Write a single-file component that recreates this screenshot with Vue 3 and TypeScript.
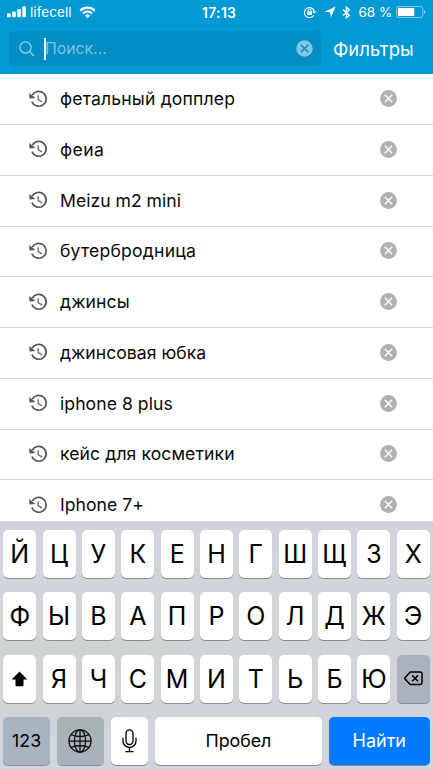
<script setup lang="ts">
interface HistoryItem {
  text: string
  spacing: number
}

const history: HistoryItem[] = [
  { text: 'фетальный допплер', spacing: 0.15 },
  { text: 'феиа', spacing: 0.4 },
  { text: 'Meizu m2 mini', spacing: 0 },
  { text: 'бутербродница', spacing: 0.2 },
  { text: 'джинсы', spacing: 0.1 },
  { text: 'джинсовая юбка', spacing: 0.02 },
  { text: 'iphone 8 plus', spacing: 0.05 },
  { text: 'кейс для косметики', spacing: 0.09 },
  { text: 'Iphone 7+', spacing: 0.04 },
]

const topRow: string[] = [...'ЙЦУКЕНГШЩЗХ']
const middleRow: string[] = [...'ФЫВАПРОЛДЖЭ']
const lowerRow: string[] = [...'ЯЧСМИТЬБЮ']
</script>

<template>
  <div class="screen">
    <header class="header">
      <div class="status">
        <div class="status-left">
          <svg class="signal" width="20" height="12" viewBox="0 0 20 12" fill="#fff">
            <rect x="0" y="7.3" width="3.7" height="4" rx="0.9" />
            <rect x="5.1" y="5.4" width="3.7" height="5.9" rx="0.9" />
            <rect x="10.2" y="3" width="3.7" height="8.3" rx="0.9" />
            <rect x="15.3" y="0.3" width="3.7" height="11" rx="0.9" />
          </svg>
          <span class="carrier">lifecell</span>
          <svg class="wifi" width="17" height="13" viewBox="0 0 17 13">
            <path d="M1.2 4.6A10.6 10.6 0 0 1 15.8 4.6" fill="none" stroke="#fff" stroke-width="2.2" />
            <path d="M3.9 7.4A6.7 6.7 0 0 1 13.1 7.4" fill="none" stroke="#fff" stroke-width="2.1" />
            <path d="M5.9 9.5A3.9 3.9 0 0 1 11.1 9.5L8.5 12.2Z" fill="#fff" />
          </svg>
        </div>
        <span class="clock">17:13</span>
        <div class="status-right">
          <svg class="lock" width="14" height="12" viewBox="0 0 14 12">
            <path d="M10.7 9.2A5 5 0 1 1 11.2 5" fill="none" stroke="#fff" stroke-width="1.1" />
            <path d="M9.2 5.3H13.3L11.3 7.7Z" fill="#fff" />
            <rect x="4.1" y="5.3" width="4.8" height="3.6" rx="0.4" fill="#fff" />
            <path d="M5 5.6V4.5a1.5 1.5 0 0 1 3 0V5.6" fill="none" stroke="#fff" stroke-width="1" />
          </svg>
          <svg class="arrow" width="12" height="12" viewBox="0 0 12 12">
            <path d="M11.6 0.6L6.9 11.6L6.1 6.3L0.5 5.7Z" fill="#fff" />
          </svg>
          <svg class="bluetooth" width="9" height="13" viewBox="0 0 9 13">
            <path d="M1 3.6L7.4 9.2L4.4 11.8V1.2L7.4 3.8L1 9.4" fill="none" stroke="#fff" stroke-width="1.3" />
          </svg>
          <span class="percent">68 %</span>
          <svg class="battery" width="30" height="12" viewBox="0 0 30 12">
            <rect x="0.6" y="0.6" width="26.2" height="10.8" rx="2.2" fill="none" stroke="#8fd0ed" stroke-width="1" />
            <rect x="2" y="2" width="16.3" height="8" rx="0.8" fill="#fff" />
            <path d="M28 4V8Q29.4 7.3 29.4 6T28 4Z" fill="#8fd0ed" />
          </svg>
        </div>
      </div>
      <div class="search-line">
        <div class="search">
          <svg class="magnifier" width="16" height="16" viewBox="0 0 16 16" fill="none" stroke="#a0d3eb" stroke-width="1.2">
            <circle cx="6.5" cy="6.5" r="5.6" />
            <path d="M10.6 10.6L15 15" />
          </svg>
          <i class="caret"></i>
          <span class="placeholder">Поиск...</span>
          <svg class="clear" width="17" height="17" viewBox="0 0 17 17">
            <circle cx="8.5" cy="8.5" r="8.2" fill="#84c6e3" />
            <path d="M4.8 4.8L12.2 12.2M12.2 4.8L4.8 12.2" stroke="#008dc3" stroke-width="1.4" />
          </svg>
        </div>
        <span class="filters">Фильтры</span>
      </div>
    </header>

    <ul class="history">
      <li v-for="item in history" :key="item.text" class="row">
        <svg class="clock-icon" width="19" height="18" viewBox="0 0 19 18">
          <path d="M3.3 5.2A7.4 7.4 0 1 1 2.9 11.6" fill="none" stroke="#555" stroke-width="1.7" />
          <path d="M0.4 3.4L0.8 8.2L5.9 7.8Z" fill="#555" stroke="#555" stroke-width="0.5" />
          <path d="M9.2 5.2V9.6L12.8 11.9" fill="none" stroke="#666" stroke-width="1.3" />
        </svg>
        <span class="query" :style="{ letterSpacing: item.spacing + 'px' }">{{ item.text }}</span>
        <svg class="remove" width="17" height="17" viewBox="0 0 17 17">
          <circle cx="8.5" cy="8.5" r="8.4" fill="#b1b1b1" />
          <path d="M4.8 4.8L12.2 12.2M12.2 4.8L4.8 12.2" stroke="#fff" stroke-width="1.4" />
        </svg>
      </li>
    </ul>

    <section class="keyboard">
      <div class="keys">
        <span v-for="k in topRow" :key="k" class="key">{{ k }}</span>
      </div>
      <div class="keys">
        <span v-for="k in middleRow" :key="k" class="key">{{ k }}</span>
      </div>
      <div class="keys">
        <span class="key">
          <svg width="17" height="16" viewBox="0 0 17 16">
            <path d="M8.5 0.5L16.3 8.6H12.5V14.2Q12.5 15.2 11.5 15.2H5.5Q4.5 15.2 4.5 14.2V8.6H0.7Z" fill="#000" />
          </svg>
        </span>
        <span v-for="k in lowerRow" :key="k" class="key">{{ k }}</span>
        <span class="key dark">
          <svg width="19" height="15" viewBox="0 0 19 15" fill="none" stroke="#000" stroke-width="1.5">
            <path d="M6.2 1H16A2 2 0 0 1 18 3V11.6A2 2 0 0 1 16 13.6H6.2L1 7.9Q0.7 7.3 1 6.7Z" stroke-linejoin="round" />
            <path d="M8.2 4.4L14 10.2M14 4.4L8.2 10.2" />
          </svg>
        </span>
      </div>
      <div class="keys bottom">
        <span class="key dark numbers">123</span>
        <span class="key dark globe">
          <svg width="24" height="24" viewBox="0 0 24 24" fill="none" stroke="#111" stroke-width="1.25">
            <circle cx="12" cy="12" r="11.1" />
            <ellipse cx="12" cy="12" rx="5.6" ry="11.1" />
            <path d="M12 1V23M1 12H23M3.2 5.6Q12 9.4 20.8 5.6M3.2 18.4Q12 14.6 20.8 18.4" />
          </svg>
        </span>
        <span class="key mic">
          <svg width="15" height="24" viewBox="0 0 15 24" fill="none" stroke="#000" stroke-width="1.35">
            <rect x="4" y="0.9" width="7" height="14.6" rx="3.5" />
            <path d="M1 8.8V12A6.5 6.5 0 0 0 14 12V8.8M7.5 18.4V22.4M3.4 22.6H11.6" />
          </svg>
        </span>
        <span class="key space">Пробел</span>
        <span class="key find">Найти</span>
      </div>
    </section>
  </div>
</template>

<style>
body {
  margin: 0;
}
</style>

<style scoped>
.screen {
  width: 433px;
  height: 770px;
  overflow: hidden;
  display: flex;
  flex-direction: column;
  background: #fff;
  color: #0a0a0a;
  font-family: Inter, 'Liberation Sans', sans-serif;
}

.header {
  flex: none;
  height: 73.6px;
  background: #0099d4;
  color: #fff;
}

.status {
  height: 24px;
  padding: 0 6px 0 7px;
  display: grid;
  grid-template-columns: 195px auto 1fr;
  align-items: center;
  box-sizing: border-box;
}

.status-left,
.status-right {
  display: flex;
  align-items: center;
}

.status-right {
  justify-content: flex-end;
  padding-right: 0.8px;
}

.carrier {
  margin-left: 3px;
  font-size: 13.4px;
  letter-spacing: 0.1px;
}

.wifi {
  margin-left: 7.5px;
}

.clock {
  font-size: 14px;
  font-weight: 600;
  letter-spacing: 0.3px;
}

.arrow {
  margin-left: 7px;
}

.bluetooth {
  margin-left: 6px;
}

.percent {
  margin: 0 4px 0 7px;
  font-size: 13.5px;
  white-space: nowrap;
}

.search-line {
  display: flex;
  align-items: center;
  padding: 7px 0 0 9px;
}

.search {
  width: 312px;
  height: 35px;
  box-sizing: border-box;
  padding: 0 8px 0 10px;
  display: flex;
  align-items: center;
  border-radius: 5px;
  background: #008dc3;
}

.caret {
  width: 2px;
  height: 22px;
  margin-left: 9px;
  background: #fff;
}

.placeholder {
  margin-left: -1px;
  font-size: 15.8px;
  color: #7fc4e1;
}

.clear {
  margin-left: auto;
}

.filters {
  margin-left: 12px;
  font-size: 18.5px;
}

.history {
  flex: none;
  height: 447px;
  box-sizing: border-box;
  margin: 0;
  padding: 0.8px 0 0;
  overflow: hidden;
  list-style: none;
}

.row {
  height: 50.75px;
  box-sizing: border-box;
  padding: 0 36px 1.4px 29px;
  display: flex;
  align-items: center;
  border-bottom: 1px solid #dcdcdc;
}

.query {
  margin-left: 12px;
  font-size: 17.6px;
  white-space: nowrap;
}

.remove {
  margin-left: auto;
}

.keyboard {
  flex: 1;
  padding: 9.5px 3.3px 0;
  display: flex;
  flex-direction: column;
  gap: 14.3px;
  background:
    radial-gradient(ellipse 150px 70px at 80px 140px, rgba(207, 211, 203, 0.8), rgba(207, 211, 203, 0)),
    linear-gradient(#d0d3dc, #d1d4d8 45%, #d0d4dc);
}

.keys {
  display: flex;
  gap: 6.4px;
}

.key {
  flex: 1 1 0;
  min-width: 0;
  height: 48px;
  display: flex;
  align-items: center;
  justify-content: center;
  border-radius: 5px;
  background: #fff;
  box-shadow: 0 1px 0 #898c90;
  color: #000;
  font-size: 25px;
}

.dark {
  background: #abb2bd;
}

.bottom {
  gap: 7px;
}

.bottom .key {
  flex: none;
}

.bottom .numbers {
  width: 46.6px;
  font-size: 17.8px;
  background: #a9b3c0;
}

.bottom .globe {
  width: 47.2px;
  background: linear-gradient(#a9b2b3, #a8b2c0);
}

.bottom .mic {
  width: 36.8px;
}

.bottom .space {
  width: 167px;
  font-size: 17.8px;
}

.bottom .find {
  flex: 1 1 0;
  background: #007aff;
  color: #fff;
  font-size: 18px;
}
</style>
